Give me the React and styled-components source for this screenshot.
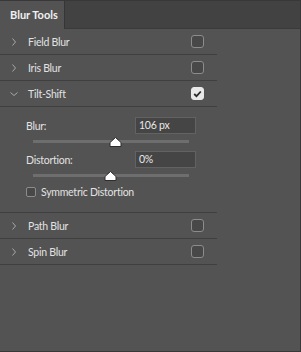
import React from "react";
import styled, { createGlobalStyle } from "styled-components";

const Global = createGlobalStyle`
  html, body {
    margin: 0;
    padding: 0;
    background: #535353;
  }
  body {
    font-family: "Lato", "Open Sans", sans-serif;
  }
`;

const Panel = styled.div`
  width: 301px;
  height: 352px;
  box-sizing: border-box;
  background: #535353;
  border-top: 1px solid #383838;
  border-right: 1px solid #383838;
  border-bottom: 1px solid #383838;
  display: flex;
  flex-direction: column;
  overflow: hidden;
`;

const TabBar = styled.div`
  height: 27px;
  background: #424242;
  border-bottom: 1px solid #3a3a3a;
  display: flex;
  flex-shrink: 0;
`;

const Tab = styled.div`
  width: 65px;
  height: 28px;
  box-sizing: border-box;
  background: #535353;
  border-right: 1px solid #363636;
  color: #f0f0f0;
  font-size: 11px;
  font-weight: 700;
  padding-left: 10px;
  line-height: 27px;
`;

const List = styled.div`
  display: flex;
  flex-direction: column;
  width: 217px;
`;

const Row = styled.div`
  height: 25px;
  border-bottom: 1px solid #3f3f3f;
  display: flex;
  align-items: center;
  color: #e2e2e2;
  font-size: 10.5px;
  letter-spacing: -0.25px;
`;

const Chevron = styled.span`
  width: 28px;
  display: flex;
  justify-content: center;
`;

const Label = styled.span`
  flex: 1;
`;

const Box = styled.span`
  width: 11px;
  height: 11px;
  margin-right: 13px;
  border: 1px solid ${(p) => (p.$on ? "#e8e8e8" : "#8c8c8c")};
  border-radius: 3px;
  background: ${(p) => (p.$on ? "#e8e8e8" : "#484848")};
  display: flex;
  align-items: center;
  justify-content: center;
`;

const Settings = styled.div`
  border-bottom: 1px solid #3f3f3f;
  padding: 10px 0 13px 26px;
  display: flex;
  flex-direction: column;
  color: #e2e2e2;
  font-size: 10.5px;
  letter-spacing: -0.25px;
`;

const Field = styled.div`
  display: flex;
  flex-direction: column;
  height: 34px;
`;

const FieldTop = styled.div`
  display: flex;
  align-items: center;
  justify-content: space-between;
  width: 170px;
  height: 17px;
`;

const Input = styled.div`
  width: 56px;
  height: 15px;
  background: #454545;
  border: 1px solid #626262;
  color: #e8e8e8;
  font-size: 10.5px;
  line-height: 15px;
  padding-left: 3px;
  box-sizing: content-box;
`;

const Track = styled.div`
  position: relative;
  margin: 6px 0 0 7px;
  width: 156px;
  height: 3px;
  background: #6e6e6e;
`;

const Thumb = styled.svg`
  position: absolute;
  top: -3px;
  margin-left: -6px;
`;

const Option = styled.div`
  display: flex;
  align-items: center;
  gap: 5px;
  height: 14px;
`;

const SmallBox = styled.span`
  width: 8px;
  height: 8px;
  border: 1px solid #8c8c8c;
  border-radius: 2px;
  background: #484848;
`;

function Arrow({ open }) {
  return (
    <svg width="8" height="8" viewBox="0 0 8 8">
      {open ? (
        <path d="M0.5 2.5 L4 5.5 L7.5 2.5" stroke="#a8a8a8" strokeWidth="1" fill="none" />
      ) : (
        <path d="M2.5 0.5 L5.5 4 L2.5 7.5" stroke="#a8a8a8" strokeWidth="1" fill="none" />
      )}
    </svg>
  );
}

function Check({ on }) {
  return (
    <Box $on={on}>
      {on && (
        <svg width="9" height="8" viewBox="0 0 9 8">
          <path d="M1.2 4 L3.5 6.2 L7.8 1.5" stroke="#2a2a2a" strokeWidth="1.8" fill="none" />
        </svg>
      )}
    </Box>
  );
}

function Slider({ label, value, pos }) {
  return (
    <Field>
      <FieldTop>
        <span>{label}</span>
        <Input>{value}</Input>
      </FieldTop>
      <Track>
        <Thumb width="13" height="10" viewBox="0 0 13 10" style={{ left: pos }}>
          <path d="M6.5 0.5 L12 5.5 L12 9.5 L1 9.5 L1 5.5 Z" fill="#ffffff" stroke="#2e2e2e" strokeWidth="1" />
        </Thumb>
      </Track>
    </Field>
  );
}

function Item({ name, open, on }) {
  return (
    <Row>
      <Chevron>
        <Arrow open={open} />
      </Chevron>
      <Label>{name}</Label>
      <Check on={on} />
    </Row>
  );
}

export default function App() {
  return (
    <>
      <Global />
      <Panel>
        <TabBar>
          <Tab>Blur Tools</Tab>
        </TabBar>
        <List>
          <Item name="Field Blur" />
          <Item name="Iris Blur" />
          <Item name="Tilt-Shift" open on />
          <Settings>
            <Slider label="Blur:" value="106 px" pos="82px" />
            <Slider label="Distortion:" value="0%" pos="77px" />
            <Option>
              <SmallBox />
              <span>Symmetric Distortion</span>
            </Option>
          </Settings>
          <Item name="Path Blur" />
          <Item name="Spin Blur" />
        </List>
      </Panel>
    </>
  );
}
